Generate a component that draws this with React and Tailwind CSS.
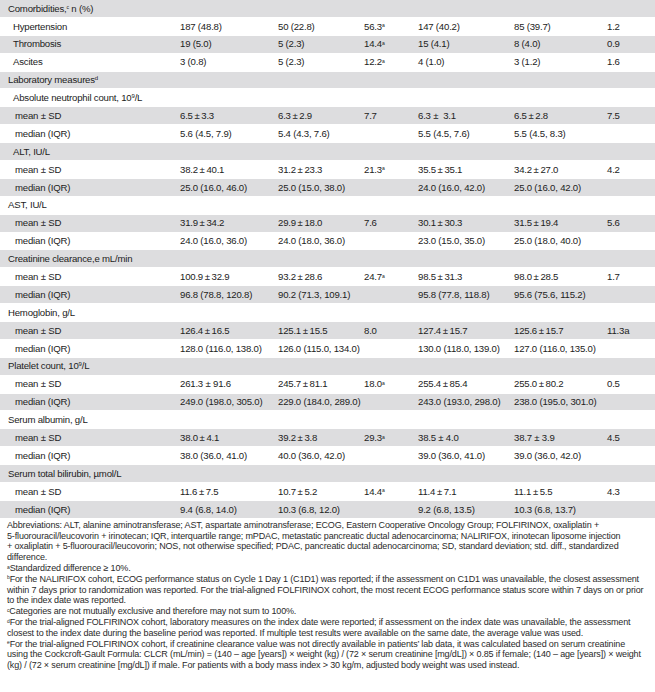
import React from 'react';

// rows: [kind, label, c2, c3, c4, c5, c6, c7]
// kind: 'h' = section header, 'g' = group label, 'i' = item, 's' = sub stat
const T = '\u2009±\u2009';
const rows = [
  ['h', <>Comorbidities,<sup className="text-[5px]">c</sup> n (%)</>],
  ['i', 'Hypertension', '187 (48.8)', '50 (22.8)', <>56.3<sup className="text-[5px]">a</sup></>, '147 (40.2)', '85 (39.7)', '1.2'],
  ['i', 'Thrombosis', '19 (5.0)', '5 (2.3)', <>14.4<sup className="text-[5px]">a</sup></>, '15 (4.1)', '8 (4.0)', '0.9'],
  ['i', 'Ascites', '3 (0.8)', '5 (2.3)', <>12.2<sup className="text-[5px]">a</sup></>, '4 (1.0)', '3 (1.2)', '1.6'],
  ['h', <>Laboratory measures<sup className="text-[6px]">d</sup></>],
  ['i', <>Absolute neutrophil count, 10<sup className="text-[6px]">9</sup>/L</>],
  ['s', 'mean ± SD', `6.5${T}3.3`, `6.3${T}2.9`, '7.7', '6.3 ±  3.1', `6.5${T}2.8`, '7.5'],
  ['s', 'median (IQR)', '5.6 (4.5, 7.9)', '5.4 (4.3, 7.6)', '', '5.5 (4.5, 7.6)', '5.5 (4.5, 8.3)', ''],
  ['i', 'ALT, IU/L'],
  ['s', 'mean ± SD', `38.2${T}40.1`, `31.2${T}23.3`, <>21.3<sup className="text-[5px]">a</sup></>, `35.5${T}35.1`, `34.2${T}27.0`, '4.2'],
  ['s', 'median (IQR)', '25.0 (16.0, 46.0)', '25.0 (15.0, 38.0)', '', '24.0 (16.0, 42.0)', '25.0 (16.0, 42.0)', ''],
  ['g', 'AST, IU/L'],
  ['s', 'mean ± SD', `31.9${T}34.2`, `29.9${T}18.0`, '7.6', `30.1${T}30.3`, `31.5${T}19.4`, '5.6'],
  ['s', 'median (IQR)', '24.0 (16.0, 36.0)', '24.0 (18.0, 36.0)', '', '23.0 (15.0, 35.0)', '25.0 (18.0, 40.0)', ''],
  ['g', 'Creatinine clearance,e mL/min'],
  ['s', 'mean ± SD', `100.9${T}32.9`, `93.2${T}28.6`, <>24.7<sup className="text-[5px]">a</sup></>, `98.5${T}31.3`, `98.0${T}28.5`, '1.7'],
  ['s', 'median (IQR)', '96.8 (78.8, 120.8)', '90.2 (71.3, 109.1)', '', '95.8 (77.8, 118.8)', '95.6 (75.6, 115.2)', ''],
  ['g', 'Hemoglobin, g/L'],
  ['s', 'mean ± SD', `126.4${T}16.5`, `125.1${T}15.5`, '8.0', `127.4${T}15.7`, `125.6${T}15.7`, '11.3a'],
  ['s', 'median (IQR)', '128.0 (116.0, 138.0)', '126.0 (115.0, 134.0)', '', '130.0 (118.0, 139.0)', '127.0 (116.0, 135.0)', ''],
  ['g', <>Platelet count, 10<sup className="text-[6px]">9</sup>/L</>],
  ['s', 'mean ± SD', '261.3 ± 91.6', `245.7${T}81.1`, <>18.0<sup className="text-[5px]">a</sup></>, `255.4${T}85.4`, `255.0${T}80.2`, '0.5'],
  ['s', 'median (IQR)', '249.0 (198.0, 305.0)', '229.0 (184.0, 289.0)', '', '243.0 (193.0, 298.0)', '238.0 (195.0, 301.0)', ''],
  ['g', 'Serum albumin, g/L'],
  ['s', 'mean ± SD', `38.0${T}4.1`, `39.2${T}3.8`, <>29.3<sup className="text-[5px]">a</sup></>, '38.5 ± 4.0', '38.7 ± 3.9', '4.5'],
  ['s', 'median (IQR)', '38.0 (36.0, 41.0)', '40.0 (36.0, 42.0)', '', '39.0 (36.0, 41.0)', '39.0 (36.0, 42.0)', ''],
  ['g', 'Serum total bilirubin, µmol/L'],
  ['s', 'mean ± SD', `11.6${T}7.5`, `10.7${T}5.2`, <>14.4<sup className="text-[5px]">a</sup></>, `11.4${T}7.1`, `11.1${T}5.5`, '4.3'],
  ['s', 'median (IQR)', '9.4 (6.8, 14.0)', '10.3 (6.8, 12.0)', '', '9.2 (6.8, 13.5)', '10.3 (6.8, 13.7)', ''],
];

const indent = { h: 'pl-[8px]', g: 'pl-[8px]', i: 'pl-[13px]', s: 'pl-[15px]' };

function Row({ row, idx }) {
  const [kind, label, ...cells] = row;
  const bg = idx % 2 === 0 ? 'bg-[#dddddf]' : 'bg-white';
  return (
    <div className={`grid grid-cols-[180px_98px_86px_54px_96px_93px_1fr] h-[17.9px] border-b border-white items-center ${bg}`}>
      <div className={`${indent[kind]} whitespace-nowrap`}>{label}</div>
      {cells.map((c, i) => (
        <div key={i} className="whitespace-pre">{c}</div>
      ))}
    </div>
  );
}

// footnote: lines broken where the printed table breaks them
function Note({ mark, lines }) {
  return (
    <p className="whitespace-nowrap">
      {mark && <sup className="text-[5px] leading-none">{mark}</sup>}
      {lines.map((l, i) => (
        <React.Fragment key={i}>
          {i > 0 && <br />}
          {l}
        </React.Fragment>
      ))}
    </p>
  );
}

export default function App() {
  return (
    <div className="w-[655px] h-[692px] bg-white text-[#222] overflow-hidden" style={{ fontFamily: '"Liberation Sans", Arial, sans-serif' }}>
      {/* table body */}
      <div className="text-[9.6px] tracking-[-0.2px] leading-none">
        {rows.map((r, i) => (
          <Row key={i} row={r} idx={i} />
        ))}
      </div>

      {/* footnotes */}
      <div className="mt-[1px] pl-[7px] text-[9px] leading-[10.8px] tracking-[-0.15px] text-[#2a2a2a]">
        <Note
          lines={[
            'Abbreviations: ALT, alanine aminotransferase; AST, aspartate aminotransferase; ECOG, Eastern Cooperative Oncology Group; FOLFIRINOX, oxaliplatin +',
            '5-fluorouracil/leucovorin + irinotecan; IQR, interquartile range; mPDAC, metastatic pancreatic ductal adenocarcinoma; NALIRIFOX, irinotecan liposome injection',
            '+ oxaliplatin + 5-fluorouracil/leucovorin; NOS, not otherwise specified; PDAC, pancreatic ductal adenocarcinoma; SD, standard deviation; std. diff., standardized',
            'difference.',
          ]}
        />
        <Note mark="a" lines={['Standardized difference ≥ 10%.']} />
        <Note
          mark="b"
          lines={[
            'For the NALIRIFOX cohort, ECOG performance status on Cycle 1 Day 1 (C1D1) was reported; if the assessment on C1D1 was unavailable, the closest assessment',
            'within 7 days prior to randomization was reported. For the trial-aligned FOLFIRINOX cohort, the most recent ECOG performance status score within 7 days on or prior',
            'to the index date was reported.',
          ]}
        />
        <Note mark="c" lines={['Categories are not mutually exclusive and therefore may not sum to 100%.']} />
        <Note
          mark="d"
          lines={[
            'For the trial-aligned FOLFIRINOX cohort, laboratory measures on the index date were reported; if assessment on the index date was unavailable, the assessment',
            'closest to the index date during the baseline period was reported. If multiple test results were available on the same date, the average value was used.',
          ]}
        />
        <Note
          mark="e"
          lines={[
            'For the trial-aligned FOLFIRINOX cohort, if creatinine clearance value was not directly available in patients’ lab data, it was calculated based on serum creatinine',
            'using the Cockcroft-Gault Formula: CLCR (mL/min) = (140 – age [years]) × weight (kg) / (72 × serum creatinine [mg/dL]) × 0.85 if female; (140 – age [years]) × weight',
            '(kg) / (72 × serum creatinine [mg/dL]) if male. For patients with a body mass index > 30 kg/m, adjusted body weight was used instead.',
          ]}
        />
      </div>
    </div>
  );
}
